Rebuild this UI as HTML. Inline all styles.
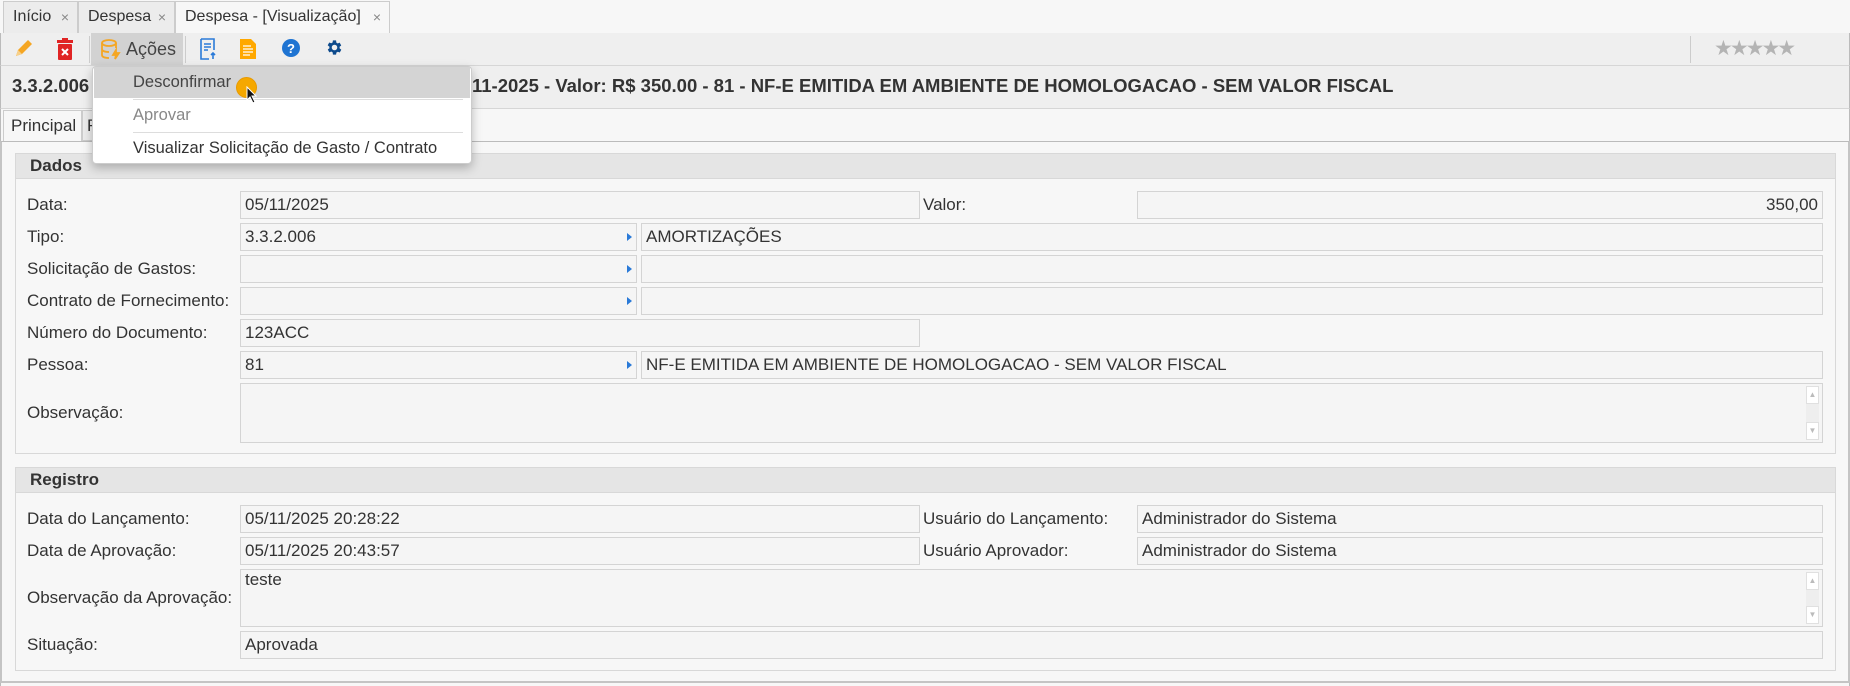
<!DOCTYPE html><html><head><meta charset="utf-8"><style>
*{box-sizing:border-box;margin:0;padding:0}
body{width:1850px;height:686px;background:#f7f7f7;font-family:"Liberation Sans",sans-serif;color:#333;position:relative;overflow:hidden;font-size:17px}
.a{position:absolute}
.tab{position:absolute;top:1px;height:32px;border:1px solid #ccc;border-bottom:none;background:#ececec;font-size:16px;line-height:30px;padding-left:9px}
.tab .x{position:absolute;right:8px;top:0;color:#888;font-size:14px}
.lbl{position:absolute;font-size:17px;line-height:28px;left:27px;white-space:nowrap}
.in{position:absolute;height:28px;border:1px solid #d4d4d4;background:#f5f5f5;font-size:17px;line-height:26px;padding-left:4px;white-space:nowrap}
.arr{position:absolute;right:4px;top:9px;width:0;height:0;border-left:5px solid #2a7ad8;border-top:4px solid transparent;border-bottom:4px solid transparent}
.hdr{position:absolute;left:15px;width:1821px;height:26px;background:#e5e5e5;border:1px solid #d8d8d8;font-weight:bold;font-size:17px;line-height:24px;padding-left:14px}
.sec{position:absolute;left:15px;width:1821px;border:1px solid #d8d8d8}
.sb{position:absolute;right:3px;width:13px;background:#eee}
.sb div{position:absolute;left:0;width:13px;height:18px;background:#fff;border:1px solid #e0e0e0;font-size:8px;color:#bbb;text-align:center;line-height:16px}
</style></head><body>
<div class="a" style="left:0;top:33px;width:1850px;height:1px;background:#bbb"></div>
<div class="tab" style="left:3px;width:75px">Início<span class="x">×</span></div>
<div class="tab" style="left:78px;width:97px">Despesa<span class="x">×</span></div>
<div class="tab" style="left:175px;width:215px;background:#f7f7f7;height:34px">Despesa - [Visualização]<span class="x">×</span></div>
<div class="a" style="left:0;top:33px;width:1850px;height:33px;background:#efefef;border:1px solid #bbb;border-top:none;border-bottom:1px solid #d6d6d6"></div>
<svg class="a" style="left:12px;top:38px" width="22" height="22" viewBox="0 0 22 22"><path d="M4 18l2-6 10-10 4 4-10 10z" fill="#f5a623"/><path d="M4 18l2-6 4 4z" fill="#f7d08a"/></svg>
<svg class="a" style="left:56px;top:38px" width="18" height="22" viewBox="0 0 18 22"><rect x="1" y="2" width="16" height="3" fill="#e02424"/><rect x="6" y="0" width="6" height="3" fill="#e02424"/><rect x="2" y="6" width="14" height="16" rx="1" fill="#e02424"/><path d="M6 11l6 6M12 11l-6 6" stroke="#fff" stroke-width="2"/></svg>
<div class="a" style="left:89px;top:36px;width:1px;height:27px;background:#ccc"></div>
<div class="a" style="left:91px;top:33px;width:92px;height:32px;background:#d2d2d2"></div>
<svg class="a" style="left:100px;top:38px" width="22" height="22" viewBox="0 0 22 22" fill="none" stroke="#f5a623" stroke-width="1.8"><ellipse cx="9" cy="5" rx="7" ry="3"/><path d="M2 5v12c0 2 3 3 7 3M16 5v5M2 11c0 2 3 3 7 3"/><path d="M16 12l-3 5h3l-1 4 4-6h-3z" fill="#f5a623"/></svg>
<div class="a" style="left:126px;top:34px;font-size:18px;line-height:30px;color:#444">Ações</div>
<div class="a" style="left:185px;top:36px;width:1px;height:27px;background:#ccc"></div>
<svg class="a" style="left:200px;top:38px" width="16" height="22" viewBox="0 0 16 22" fill="none" stroke="#2a7ad8" stroke-width="1.6"><path d="M1 1h13v11M1 1v20h8"/><path d="M4 6h7M4 9h7M4 12h4"/><path d="M13 21v-6M11 17l2-2 2 2"/></svg>
<svg class="a" style="left:240px;top:39px" width="16" height="20" viewBox="0 0 16 20"><path d="M0 0h11l5 5v15H0z" fill="#ffa800"/><path d="M3 7h8M3 10h10M3 13h10M3 16h7" stroke="#fff" stroke-width="1.3"/></svg>
<svg class="a" style="left:282px;top:39px" width="18" height="18" viewBox="0 0 18 18"><circle cx="9" cy="9" r="9" fill="#1f74d2"/><text x="9" y="14" text-anchor="middle" font-family="Liberation Sans" font-weight="bold" font-size="13" fill="#fff">?</text></svg>
<svg class="a" style="left:325px;top:38px" width="19" height="19" viewBox="0 0 24 24"><path fill="#0d4a8c" d="M19.4 13a7.5 7.5 0 000-2l2.1-1.6-2-3.5-2.5 1a7 7 0 00-1.7-1L15 3h-4l-.4 2.7a7 7 0 00-1.7 1l-2.5-1-2 3.5L6.6 11a7.5 7.5 0 000 2l-2.1 1.6 2 3.5 2.5-1a7 7 0 001.7 1L11 21h4l.4-2.7a7 7 0 001.7-1l2.5 1 2-3.5zM13 15.5a3.5 3.5 0 110-7 3.5 3.5 0 010 7z" transform="translate(-1 0)"/></svg>
<div class="a" style="left:1690px;top:36px;width:1px;height:27px;background:#ccc"></div>
<div class="a" style="left:1714px;top:35px;font-size:21px;color:#b4b4b4;letter-spacing:-3px;line-height:28px">★★★★★</div>
<div class="a" style="left:0;top:66px;width:1850px;height:43px;background:#efefef;border:1px solid #bbb;border-top:none;border-bottom:1px solid #d6d6d6"></div>
<div class="a" style="left:12px;top:73px;font-weight:bold;font-size:18.5px;line-height:26px;color:#333">3.3.2.006 - AMORTIZAÇÕES - 05-</div>
<div class="a" style="left:472px;top:73px;font-weight:bold;font-size:18.5px;line-height:26px;color:#333;white-space:nowrap">11-2025 - Valor: R$ 350.00 - 81 - NF-E EMITIDA EM AMBIENTE DE HOMOLOGACAO - SEM VALOR FISCAL</div>
<div class="a" style="left:0;top:109px;width:1850px;height:577px;border-left:1px solid #bbb;border-right:1px solid #bbb"></div>
<div class="a" style="left:3px;top:110px;width:79px;height:32px;border:1px solid #ccc;border-bottom:none;background:#f7f7f7;font-size:17px;line-height:30px;padding-left:7px">Principal</div>
<div class="a" style="left:82px;top:110px;width:40px;height:31px;border:1px solid #ccc;background:#ececec;font-size:17px;line-height:30px;padding-left:4px">F</div>
<div class="a" style="left:0;top:141px;width:1850px;height:542px;border:2px solid #c4c4c4;border-top:1px solid #bbb"></div>
<div class="sec" style="top:153px;height:301px"></div>
<div class="hdr" style="top:153px">Dados</div>
<div class="lbl" style="top:191px">Data:</div><div class="in" style="left:240px;top:191px;width:680px">05/11/2025</div>
<div class="lbl" style="top:191px;left:923px">Valor:</div><div class="in" style="left:1137px;top:191px;width:686px;text-align:right;padding-right:4px">350,00</div>
<div class="lbl" style="top:223px">Tipo:</div><div class="in" style="left:240px;top:223px;width:397px">3.3.2.006<span class="arr"></span></div><div class="in" style="left:641px;top:223px;width:1182px">AMORTIZAÇÕES</div>
<div class="lbl" style="top:255px">Solicitação de Gastos:</div><div class="in" style="left:240px;top:255px;width:397px"><span class="arr"></span></div><div class="in" style="left:641px;top:255px;width:1182px"></div>
<div class="lbl" style="top:287px">Contrato de Fornecimento:</div><div class="in" style="left:240px;top:287px;width:397px"><span class="arr"></span></div><div class="in" style="left:641px;top:287px;width:1182px"></div>
<div class="lbl" style="top:319px">Número do Documento:</div><div class="in" style="left:240px;top:319px;width:680px">123ACC</div>
<div class="lbl" style="top:351px">Pessoa:</div><div class="in" style="left:240px;top:351px;width:397px">81<span class="arr"></span></div><div class="in" style="left:641px;top:351px;width:1182px">NF-E EMITIDA EM AMBIENTE DE HOMOLOGACAO - SEM VALOR FISCAL</div>
<div class="lbl" style="top:399px">Observação:</div><div class="in" style="left:240px;top:383px;width:1583px;height:60px"><div class="sb" style="top:2px;height:54px"><div style="top:0">▲</div><div style="bottom:0">▼</div></div></div>
<div class="sec" style="top:467px;height:204px"></div>
<div class="hdr" style="top:467px">Registro</div>
<div class="lbl" style="top:505px">Data do Lançamento:</div><div class="in" style="left:240px;top:505px;width:680px">05/11/2025 20:28:22</div>
<div class="lbl" style="top:505px;left:923px">Usuário do Lançamento:</div><div class="in" style="left:1137px;top:505px;width:686px">Administrador do Sistema</div>
<div class="lbl" style="top:537px">Data de Aprovação:</div><div class="in" style="left:240px;top:537px;width:680px">05/11/2025 20:43:57</div>
<div class="lbl" style="top:537px;left:923px">Usuário Aprovador:</div><div class="in" style="left:1137px;top:537px;width:686px">Administrador do Sistema</div>
<div class="lbl" style="top:584px">Observação da Aprovação:</div><div class="in" style="left:240px;top:569px;width:1583px;height:58px;line-height:20px">teste<div class="sb" style="top:2px;height:52px"><div style="top:0">▲</div><div style="bottom:0">▼</div></div></div>
<div class="lbl" style="top:631px">Situação:</div><div class="in" style="left:240px;top:631px;width:1583px">Aprovada</div>
<div class="a" style="left:92px;top:66px;width:380px;height:98px;background:#fff;border:1px solid #ccc;border-radius:4px;box-shadow:0 4px 10px rgba(0,0,0,.25)">
<div class="a" style="left:1px;top:0;width:376px;height:31px;background:#d4d4d4"></div>
<div class="a" style="left:40px;top:32px;width:330px;height:1px;background:#ddd"></div>
<div class="a" style="left:40px;top:65px;width:330px;height:1px;background:#ddd"></div>
<div class="a" style="left:40px;top:2px;font-size:16.5px;line-height:26px;color:#444">Desconfirmar</div>
<div class="a" style="left:40px;top:35px;font-size:16.5px;line-height:26px;color:#888">Aprovar</div>
<div class="a" style="left:40px;top:68px;font-size:16.5px;line-height:26px;color:#333;white-space:nowrap">Visualizar Solicitação de Gasto / Contrato</div>
</div>
<div class="a" style="left:236px;top:77px;width:21px;height:21px;border-radius:50%;background:#f5a800;border:1px solid #e89a00"></div>
<svg class="a" style="left:246px;top:86px" width="12" height="18" viewBox="0 0 12 18"><path d="M1 1v13l3-3 3 6 2-1-3-6h4z" fill="#111" stroke="#fff" stroke-width="1"/></svg>
</body></html>
